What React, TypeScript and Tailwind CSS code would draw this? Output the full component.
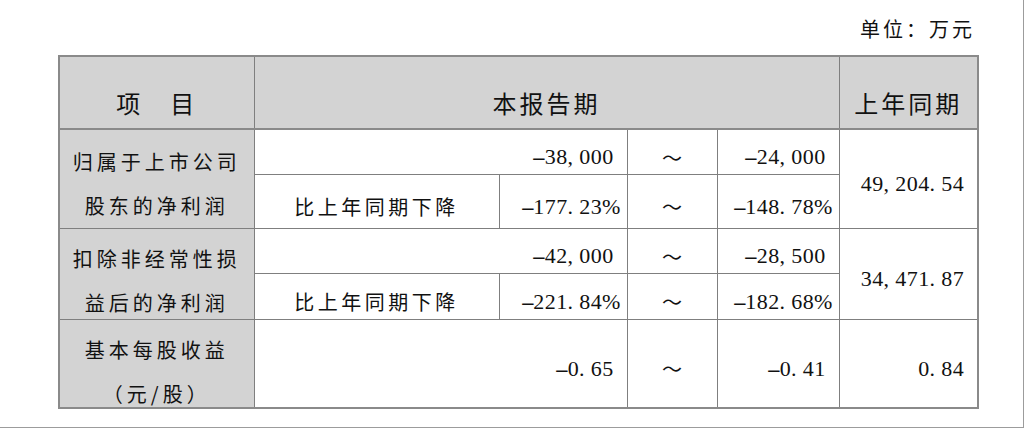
import React from "react";

const cjk = "font-['Noto_Sans_CJK_SC','Noto_Sans',sans-serif]";
const serif = "font-['Liberation_Serif','Noto_Sans_CJK_SC',serif]";
const line = "border border-[#7f7f7f]";
const gray = "bg-[#d3d3d3]";

function Num({ v }: { v: string }) {
  return (
    <span className={`inline-flex ${serif} text-[22px] leading-[24px] text-[#111]`}>
      {v.split("").map((c, i) => {
        if (c === "-")
          return (
            <span key={i} className="inline-block w-[11.5px] text-center scale-x-200">
              {c}
            </span>
          );
        if (c === "," || c === ".")
          return (
            <span key={i} className="inline-block w-[11.5px] text-left">
              {c}
            </span>
          );
        return (
          <span key={i} className="inline-block w-[11.5px] text-center">
            {c}
          </span>
        );
      })}
    </span>
  );
}

function NumCell({ v, colSpan, rowSpan }: { v: string; colSpan?: number; rowSpan?: number }) {
  return (
    <td colSpan={colSpan} rowSpan={rowSpan} className={`${line} p-0 pt-[12px] pr-[13px] text-right align-middle`}>
      <Num v={v} />
    </td>
  );
}

function Tilde({ rowSpan }: { rowSpan?: number }) {
  return (
    <td rowSpan={rowSpan} className={`${line} p-0 pt-[12px] text-center align-middle ${cjk} text-[20px] leading-[24px] text-[#111]`}>
      ～
    </td>
  );
}

function Label({ lines, pt, h }: { lines: string[]; pt: string; h: string }) {
  return (
    <td rowSpan={2} className={`${line} ${gray} p-0 align-top text-center ${cjk} text-[20px] tracking-[4px] text-[#111]`}>
      <div className={`${pt} ${h} leading-[44px]`}>
        {lines.map((l, i) => (
          <div key={i}>{l}</div>
        ))}
      </div>
    </td>
  );
}

function SubLabel() {
  return (
    <td className={`${line} p-0 pt-[12px] text-center align-middle ${cjk} text-[20px] leading-[24px] tracking-[3.5px] text-[#111]`}>
      比上年同期下降
    </td>
  );
}

export default function App() {
  return (
    <div className="w-[1024px] h-[428px] bg-white border-r border-b border-[#9c9c9c] overflow-hidden">
      <div className="pl-[58px] w-[977px]">
        <div className={`h-[55px] flex justify-end items-start pt-[17px] pr-[2px] ${cjk} text-[20px] leading-[24px] tracking-[3px] text-[#111]`}>
          单位：万元
        </div>
        <table className="w-[919px] table-fixed border-collapse border-2 border-[#8a8a8a]">
          <colgroup>
            <col className="w-[195px]" />
            <col className="w-[245px]" />
            <col className="w-[128px]" />
            <col className="w-[90px]" />
            <col className="w-[122px]" />
            <col className="w-[139px]" />
          </colgroup>
          <tbody>
            <tr className="h-[73px]">
              <td className={`${line} ${gray} border-b-2 border-b-[#8a8a8a] p-0 pt-[20px] text-center align-middle ${cjk} text-[24px] leading-[28px] tracking-[3px] text-[#111]`}>
                项　目
              </td>
              <td colSpan={4} className={`${line} ${gray} border-b-2 border-b-[#8a8a8a] p-0 pt-[20px] text-center align-middle ${cjk} text-[24px] leading-[28px] tracking-[3px] text-[#111]`}>
                本报告期
              </td>
              <td className={`${line} ${gray} border-b-2 border-b-[#8a8a8a] p-0 pt-[20px] text-center align-middle ${cjk} text-[24px] leading-[28px] tracking-[3px] text-[#111]`}>
                上年同期
              </td>
            </tr>
            <tr className="h-[45px]">
              <Label lines={["归属于上市公司", "股东的净利润"]} pt="pt-[10px]" h="h-[88px]" />
              <NumCell v="-38,000" colSpan={2} />
              <Tilde />
              <NumCell v="-24,000" />
              <NumCell v="49,204.54" rowSpan={2} />
            </tr>
            <tr className="h-[54px]">
              <SubLabel />
              <NumCell v="-177.23%" />
              <Tilde />
              <NumCell v="-148.78%" />
            </tr>
            <tr className="h-[45px]">
              <Label lines={["扣除非经常性损", "益后的净利润"]} pt="pt-[8px]" h="h-[82px]" />
              <NumCell v="-42,000" colSpan={2} />
              <Tilde />
              <NumCell v="-28,500" />
              <NumCell v="34,471.87" rowSpan={2} />
            </tr>
            <tr className="h-[46px]">
              <SubLabel />
              <NumCell v="-221.84%" />
              <Tilde />
              <NumCell v="-182.68%" />
            </tr>
            <tr className="h-[89px]">
              <td className={`${line} ${gray} p-0 align-top text-center ${cjk} text-[20px] tracking-[4px] text-[#111]`}>
                <div className="pt-[8px] h-[80px] leading-[44px]">
                  <div>基本每股收益</div>
                  <div>（元/股）</div>
                </div>
              </td>
              <NumCell v="-0.65" colSpan={2} />
              <Tilde />
              <NumCell v="-0.41" />
              <NumCell v="0.84" />
            </tr>
          </tbody>
        </table>
      </div>
    </div>
  );
}
